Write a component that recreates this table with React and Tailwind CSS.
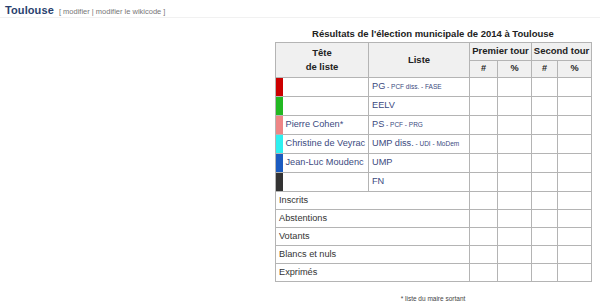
import React from "react";

const candidates = [
  { color: "bg-[#cc0000]", name: "", liste: "PG", extra: " - PCF diss. - FASE" },
  { color: "bg-[#22b822]", name: "", liste: "EELV", extra: "" },
  { color: "bg-[#ee8585]", name: "Pierre Cohen*", liste: "PS", extra: " - PCF - PRG" },
  { color: "bg-[#2ef0f0]", name: "Christine de Veyrac", liste: "UMP diss.", extra: " - UDI - MoDem" },
  { color: "bg-[#1a5bc0]", name: "Jean-Luc Moudenc", liste: "UMP", extra: "" },
  { color: "bg-[#333333]", name: "", liste: "FN", extra: "" },
];

const totals = ["Inscrits", "Abstentions", "Votants", "Blancs et nuls", "Exprimés"];

const cell = "border border-[#b4b4b4] p-0";
const head = "border border-[#b4b4b4] bg-[#f0f0f0] p-0 font-bold text-[#222] text-center";

const App = () => {
  return (
    <div className="w-[600px] h-[308px] bg-white overflow-hidden font-['Liberation_Sans',Arial,sans-serif]">
      {/* Section heading */}
      <div className="flex items-baseline gap-[5px] pl-[5px] pt-[2px] h-[18px] border-b border-[#f1f1f1]">
        <span className="text-[11px] font-bold text-[#2a3f6e] tracking-[0.1px]">Toulouse</span>
        <span className="text-[7.5px] text-[#777]">[ modifier | modifier le wikicode ]</span>
      </div>

      <div className="flex justify-end pr-[9px]">
        <div className="w-[316px] flex flex-col">
          <div className="text-center text-[9.5px] font-bold text-[#222] leading-[12px] mt-[10px] mb-[2px]">
            Résultats de l'élection municipale de 2014 à Toulouse
          </div>

          <table className="table-fixed border-collapse w-[316px] text-[9.2px] text-[#333]">
            <colgroup>
              <col className="w-[7px]" />
              <col className="w-[86px]" />
              <col className="w-[101px]" />
              <col className="w-[28px]" />
              <col className="w-[34px]" />
              <col className="w-[26px]" />
              <col className="w-[34px]" />
            </colgroup>
            <thead>
              <tr className="h-[18px]">
                <th colSpan={2} rowSpan={2} className={`${head} text-[9.5px] leading-[14px]`}>
                  Tête
                  <br />
                  de liste
                </th>
                <th rowSpan={2} className={`${head} text-[9.5px]`}>Liste</th>
                <th colSpan={2} className={`${head} text-[9.5px]`}>Premier tour</th>
                <th colSpan={2} className={`${head} text-[9.5px]`}>Second tour</th>
              </tr>
              <tr className="h-[17px]">
                <th className={head}>#</th>
                <th className={head}>%</th>
                <th className={head}>#</th>
                <th className={head}>%</th>
              </tr>
            </thead>
            <tbody>
              {candidates.map((c, i) => (
                <tr key={i} className="h-[19px]">
                  <td className={`${cell} border-r-0 ${c.color}`}></td>
                  <td className={`${cell} border-l-0 pl-[3px] text-[#3b4a80] whitespace-nowrap`}>{c.name}</td>
                  <td className={`${cell} pl-[3px] text-[#3b4a80] whitespace-nowrap`}>
                    {c.liste}
                    {c.extra && <span className="text-[6.5px]">{c.extra}</span>}
                  </td>
                  <td className={cell}></td>
                  <td className={cell}></td>
                  <td className={cell}></td>
                  <td className={cell}></td>
                </tr>
              ))}
              {totals.map((t) => (
                <tr key={t} className="h-[18px]">
                  <td colSpan={3} className={`${cell} pl-[3px] text-[#333]`}>{t}</td>
                  <td className={cell}></td>
                  <td className={cell}></td>
                  <td className={cell}></td>
                  <td className={cell}></td>
                </tr>
              ))}
            </tbody>
          </table>

          <div className="text-center text-[6.5px] text-[#444] mt-[12px]">* liste du maire sortant</div>
        </div>
      </div>
    </div>
  );
};

export default App;
